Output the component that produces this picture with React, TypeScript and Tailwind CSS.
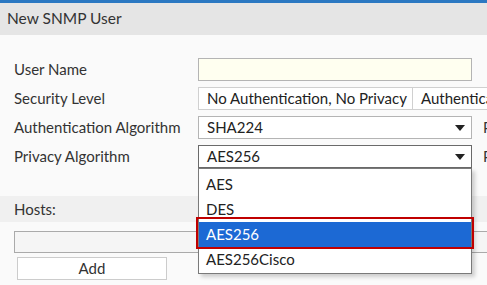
import React from "react";

const font = { fontFamily: "Lato, 'Open Sans', sans-serif" };

function Caret() {
  return (
    <svg width="10" height="6" viewBox="0 0 10 6" className="shrink-0">
      <path d="M0 0 L10 0 L5 6 Z" fill="#222" />
    </svg>
  );
}

function Select({ value, focused }: { value: string; focused?: boolean }) {
  return (
    <div className="flex items-center">
      <div
        className={`w-[274px] h-[23px] flex items-center justify-between pl-[8px] pr-[6px] bg-white border ${
          focused ? "border-[#6a6a6a]" : "border-[#b4b4b4]"
        }`}
      >
        <span className="text-[15px] text-[#222]">{value}</span>
        <Caret />
      </div>
      <span className="ml-[11px] text-[15px] text-[#333] whitespace-nowrap">Password</span>
    </div>
  );
}

export default function App() {
  const options = ["AES", "DES", "AES256", "AES256Cisco"];
  return (
    <div className="relative w-[487px] h-[285px] overflow-hidden bg-[#fafafa]" style={font}>
      <div className="h-[3px] bg-[#2b78c2]" />
      <div className="h-[32px] bg-[#e5e5e5] flex items-center pl-[7px] text-[15.5px] text-[#333]">
        New SNMP User
      </div>

      <div className="pt-[23px] flex flex-col gap-[6px] text-[15px] text-[#333]">
        <div className="flex items-center pl-[14px]">
          <span className="w-[184px] shrink-0">User Name</span>
          <div className="w-[274px] h-[23px] bg-[#fffff0] border border-[#b4b4b4]" />
        </div>
        <div className="flex items-center pl-[14px]">
          <span className="w-[184px] shrink-0">Security Level</span>
          <div className="flex h-[23px] border border-[#d0d0d0] bg-white whitespace-nowrap">
            <div className="w-[214px] shrink-0 flex items-center pl-[8px] border-r border-[#d0d0d0] text-[#222]">
              No Authentication, No Privacy
            </div>
            <div className="w-[200px] shrink-0 flex items-center pl-[8px] text-[#222]">
              Authentication, No Privacy
            </div>
          </div>
        </div>
        <div className="flex items-center pl-[14px]">
          <span className="w-[184px] shrink-0 whitespace-nowrap">Authentication Algorithm</span>
          <Select value="SHA224" />
        </div>
        <div className="flex items-center pl-[14px]">
          <span className="w-[184px] shrink-0">Privacy Algorithm</span>
          <Select value="AES256" focused />
        </div>
      </div>

      <div className="mt-[28px] h-[26px] bg-[#f0f0f0] flex items-center pl-[14px] text-[15px] text-[#333]">
        Hosts:
      </div>
      <div className="mt-[9px] ml-[14px] w-[490px] h-[22px] bg-[#f5f5f5] border border-[#aaaaaa]" />
      <button className="mt-[4px] ml-[17px] w-[150px] h-[23px] bg-white border border-[#cccccc] text-[15px] text-[#333] flex items-center justify-center">
        Add
      </button>

      {/* open dropdown list */}
      <div className="absolute left-[198px] top-[168px] w-[274px] h-[106px] bg-white border border-[#7a7a7a] shadow-[3px_3px_4px_rgba(0,0,0,0.18)] pt-[3px]">
        {options.map((o) => (
          <div
            key={o}
            className={`h-[25px] flex items-center pl-[7px] text-[15px] ${
              o === "AES256" ? "bg-[#1c69d4] text-white" : "text-[#222]"
            }`}
          >
            {o}
          </div>
        ))}
      </div>
      <div className="absolute left-[196px] top-[217px] w-[278px] h-[32px] border-2 border-[#c00000]" />
    </div>
  );
}
